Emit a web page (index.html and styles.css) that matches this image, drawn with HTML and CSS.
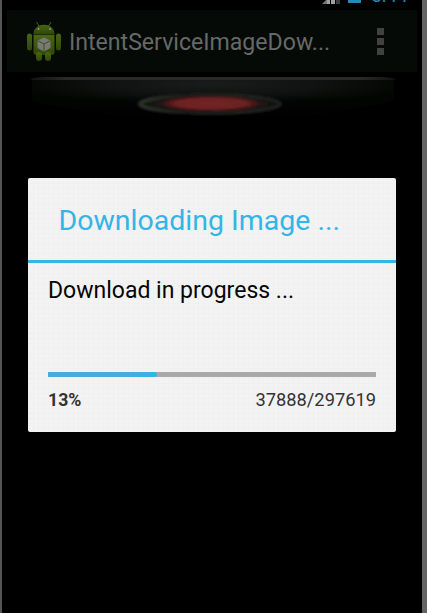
FILE: index.html
```html
<!DOCTYPE html>
<html lang="en">
<head>
<meta charset="utf-8">
<title>IntentServiceImageDownload</title>
<link rel="stylesheet" href="styles.css">
</head>
<body>
<div class="phone">
  <header class="status">
    <svg class="signal" width="19" height="4" viewBox="0 0 19 4"><path d="M4 0h1v4H0z" fill="#777"/><path d="M5 0h3v4H5zM9 0h4v4H9z" fill="#a0a0a0"/><path d="M14 0h4v4h-4z" fill="#3c3c3c"/></svg>
    <span class="battery"></span>
    <span class="clock">5:44</span>
  </header>
  <div class="bar">
    <svg class="robot" width="36" height="42" viewBox="0 0 36 42">
      <defs><linearGradient id="g" x2="0" y2="1"><stop stop-color="#4a6612"/><stop offset="1" stop-color="#304709"/></linearGradient></defs>
      <g fill="url(#g)">
        <path d="M10.500 2l3 5M25 2l-3 5" stroke="#48610f" stroke-width="1"/>
        <path d="M7.500 14c0-12.500 21-12.500 21 0z"/>
        <path d="M7.500 15h21v17q0 3-3 3h-15q-3 0-3-3z"/>
        <rect x="1" y="13.500" width="5" height="17" rx="2.500"/>
        <rect x="30" y="13.500" width="5" height="17" rx="2.500"/>
        <rect x="10" y="32" width="6" height="9" rx="3"/>
        <rect x="19" y="32" width="6" height="9" rx="3"/>
      </g>
      <path d="M7.500 14.500h21" stroke="#1e3005"/>
      <circle cx="12.500" cy="9" r="1" fill="#8c9281"/><circle cx="24" cy="9" r="1" fill="#8c9281"/>
      <path d="M18 17.500l6.500 3v7.500L18 31.500 11.500 28v-7.500z" fill="#777a75"/>
      <path d="M11.500 20.500l6.500 3.500 6.500-3.500M18 24v7.500" fill="none" stroke="#40531b"/>
    </svg>
    <h1>IntentServiceImageDow...</h1>
    <div class="more"><i></i><i></i><i></i></div>
  </div>
  <svg class="photo" width="366" height="44" viewBox="0 0 366 44">
    <defs>
      <radialGradient id="body" cx=".5" cy=".1" r=".55"><stop stop-color="#191c1a"/><stop offset=".5" stop-color="#101311"/><stop offset="1" stop-color="#030503"/></radialGradient>
      <linearGradient id="shade" x2="0" y2="1"><stop offset=".4" stop-color="#000" stop-opacity="0"/><stop offset="1" stop-color="#000"/></linearGradient>
      <radialGradient id="red"><stop stop-color="#772426"/><stop offset=".75" stop-color="#6a2022"/><stop offset="1" stop-color="#35100f"/></radialGradient>
      <linearGradient id="edge"><stop stop-color="#101210"/><stop offset=".1" stop-color="#292b29"/><stop offset=".9" stop-color="#292b29"/><stop offset="1" stop-color="#101210"/></linearGradient>
      <linearGradient id="ring"><stop stop-color="#30312b"/><stop offset=".3" stop-color="#191b18"/><stop offset=".7" stop-color="#20231f"/><stop offset="1" stop-color="#1c1d1a"/></linearGradient>
      <filter id="soft" x="-10%" y="-30%" width="120%" height="160%"><feGaussianBlur stdDeviation="1.500 .8"/></filter>
    </defs>
    <path d="M2 4h362v20C325 36 260 42 183 42S40 36 2 24z" fill="url(#body)"/>
    <path d="M2 4h362v20C325 36 260 42 183 42S40 36 2 24z" fill="url(#shade)"/>
    <path d="M0 3q5-2 16-2h334q11 0 16 2l-3 1H3z" fill="url(#edge)"/>
    <g filter="url(#soft)">
      <ellipse cx="180" cy="28" rx="70" ry="9" fill="#11130f" stroke="url(#ring)" stroke-width="4"/>
      <ellipse cx="181" cy="28" rx="57" ry="8" fill="#1c1512"/>
      <ellipse cx="181" cy="27.500" rx="48" ry="7.300" fill="url(#red)"/>
    </g>
  </svg>
</div>
<section class="dialog">
  <h2>Downloading Image ...</h2>
  <div class="content">
    <p>Download in progress ...</p>
    <div class="track"><div class="fill"></div></div>
    <div class="numbers"><b>13%</b><span>37888/297619</span></div>
  </div>
</section>
</body>
</html>
```
FILE: styles.css
```css
* { box-sizing: border-box; }
body {
  margin: 0;
  height: 613px;
  overflow: hidden;
  background: #000;
  font-family: Roboto, "Liberation Sans", sans-serif;
  border-left: 2px solid #555;
  border-right: 5px solid #646464;
  position: relative;
}
h1, h2, p { margin: 0; font-weight: 400; white-space: nowrap; }
.phone { padding: 0 5px; }
.status { height: 10px; display: flex; align-items: flex-start; justify-content: flex-end; padding-right: 10px; overflow: hidden; }
.battery { width: 13px; height: 3px; margin-left: 7px; background: #2889b0; }
.clock { width: 36px; margin-left: 10px; margin-top: -15px; font-size: 19px; line-height: 22px; color: #2889b0; }
.bar { height: 62px; background: #050a06; display: flex; align-items: center; padding-left: 19px; }
.robot { flex: none; }
h1 { margin: 2px 0 0 7px; width: 262px; font-size: 23.1px; color: #666967; }
.more { display: grid; gap: 3px; margin-left: 46px; }
.more i { width: 7px; height: 7px; background: #414141; }
.photo { display: block; margin: 4px 0 0 23px; }
.dialog {
  position: absolute;
  left: 25.5px;
  top: 178px;
  width: 368.5px;
  height: 254px;
  border-radius: 2px;
  background-color: #f3f3f3;
  background-image: linear-gradient(#f0f0f0 1px, transparent 1px), linear-gradient(90deg, #f0f0f0 1px, transparent 1px);
  background-size: 5px 5px;
}
h2 { height: 84.5px; border-bottom: 3px solid #33b5e5; padding: 25px 0 0 31px; font-size: 28.5px; line-height: 36px; color: #33b5e5; }
.content { padding: 12.5px 20px 0 20.5px; }
p { height: 97px; font-size: 23px; line-height: 31px; color: #050505; }
.track { height: 4.5px; background: #aaa8aa; }
.fill { width: 109px; height: 5px; background: linear-gradient(90deg, #47add8 75%, #33b5e5); border-radius: 0 2px 2px 0; }
.numbers { display: flex; justify-content: space-between; margin-top: 12.5px; font-size: 18px; line-height: 22px; color: #333; }
.numbers b { font-size: 17.7px; }
.numbers span { font-size: 18.3px; }
```
